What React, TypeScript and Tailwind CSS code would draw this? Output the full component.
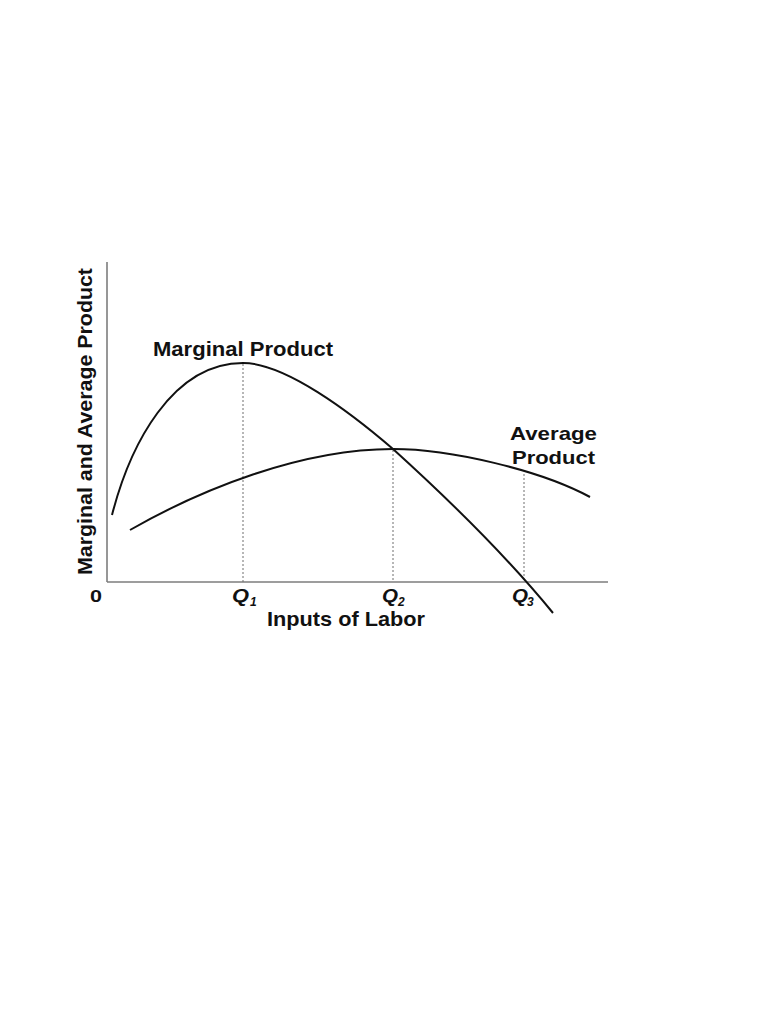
import React from 'react';

const font = '"Liberation Sans", Arial, Helvetica, sans-serif';

function ProductChart() {
  return (
    <svg
      width={550}
      height={390}
      viewBox="70 250 550 390"
      className="block"
      style={{ fontFamily: font }}
    >
      {/* axes */}
      <line x1={107} y1={262} x2={107} y2={582} stroke="#7d7d7d" strokeWidth={1.6} />
      <line x1={107} y1={582} x2={608} y2={582} stroke="#7d7d7d" strokeWidth={1.6} />

      {/* dashed guides */}
      <g stroke="#6f6f6f" strokeWidth={1} strokeDasharray="2 2">
        <line x1={243} y1={364} x2={243} y2={582} />
        <line x1={393} y1={450} x2={393} y2={582} />
        <line x1={524} y1={474} x2={524} y2={582} />
      </g>

      {/* marginal product */}
      <path
        d="M112,515 C130,445 172,363 243,363 C285,363 350,412 393,449 C425,478 500,548 553,613"
        fill="none"
        stroke="#111"
        strokeWidth={2}
      />
      {/* average product */}
      <path
        d="M130,530 C200,490 300,449 393,449 C450,449 540,470 590,497"
        fill="none"
        stroke="#111"
        strokeWidth={2}
      />

      <g fill="#111" fontWeight={700}>
        <text x={153} y={356} fontSize={20} textLength={180} lengthAdjust="spacingAndGlyphs">
          Marginal Product
        </text>
        <text x={510} y={440} fontSize={19} textLength={87} lengthAdjust="spacingAndGlyphs">
          Average
        </text>
        <text x={512} y={464} fontSize={19} textLength={83} lengthAdjust="spacingAndGlyphs">
          Product
        </text>
        <text
          transform="translate(92,575) rotate(-90)"
          fontSize={20}
          textLength={307}
          lengthAdjust="spacingAndGlyphs"
        >
          Marginal and Average Product
        </text>
        <text x={90} y={602} fontSize={17} textLength={12} lengthAdjust="spacingAndGlyphs">
          0
        </text>

        <g fontStyle="italic">
          <text x={232} y={602} fontSize={18} textLength={17} lengthAdjust="spacingAndGlyphs">Q</text>
          <text x={250} y={606} fontSize={12}>1</text>
          <text x={382} y={602} fontSize={18} textLength={16} lengthAdjust="spacingAndGlyphs">Q</text>
          <text x={398} y={606} fontSize={12}>2</text>
          <text x={512} y={602} fontSize={18} textLength={16} lengthAdjust="spacingAndGlyphs">Q</text>
          <text x={527} y={606} fontSize={12}>3</text>
        </g>

        <text x={267} y={626} fontSize={21} textLength={158} lengthAdjust="spacingAndGlyphs">
          Inputs of Labor
        </text>
      </g>
    </svg>
  );
}

export default function App() {
  return (
    <div className="w-full min-h-[1024px] bg-white pt-[250px] pl-[70px]">
      <ProductChart />
    </div>
  );
}
